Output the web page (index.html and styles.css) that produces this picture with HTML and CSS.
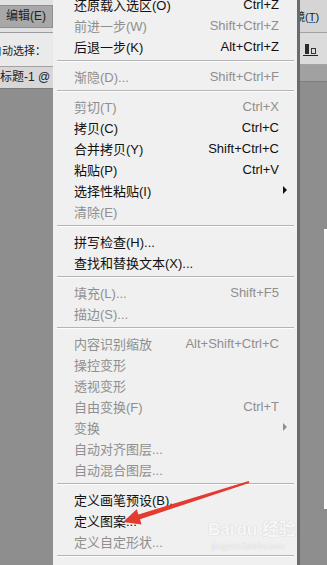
FILE: index.html
```html
<!DOCTYPE html>
<html lang="zh-CN">
<head>
    <meta charset="UTF-8">
    <meta name="viewport" content="width=device-width, initial-scale=1.0">
    <title>编辑菜单</title>
    <link rel="stylesheet" href="styles.css">
</head>
<body>
    <div class="app">
        <!-- left strip of the workspace -->
        <div class="side left">
            <div class="bar">
                <span class="bar-btn">编辑(E)</span>
            </div>
            <div class="options">自动选择：</div>
            <div class="tab">标题-1 @</div>
            <div class="canvas"></div>
        </div>

        <!-- the edit menu -->
        <div class="menu">
            <ul class="menu-list">
                <li class="item"><span>还原载入选区(O)</span><span>Ctrl+Z</span></li>
                <li class="item off"><span>前进一步(W)</span><span>Shift+Ctrl+Z</span></li>
                <li class="item"><span>后退一步(K)</span><span>Alt+Ctrl+Z</span></li>
                <li class="sep"></li>
                <li class="item off"><span>渐隐(D)...</span><span>Shift+Ctrl+F</span></li>
                <li class="sep"></li>
                <li class="item off"><span>剪切(T)</span><span>Ctrl+X</span></li>
                <li class="item"><span>拷贝(C)</span><span>Ctrl+C</span></li>
                <li class="item"><span>合并拷贝(Y)</span><span>Shift+Ctrl+C</span></li>
                <li class="item"><span>粘贴(P)</span><span>Ctrl+V</span></li>
                <li class="item"><span>选择性粘贴(I)</span><span class="arrow"></span></li>
                <li class="item off"><span>清除(E)</span></li>
                <li class="sep"></li>
                <li class="item"><span>拼写检查(H)...</span></li>
                <li class="item"><span>查找和替换文本(X)...</span></li>
                <li class="sep"></li>
                <li class="item off"><span>填充(L)...</span><span>Shift+F5</span></li>
                <li class="item off"><span>描边(S)...</span></li>
                <li class="sep"></li>
                <li class="item off"><span>内容识别缩放</span><span>Alt+Shift+Ctrl+C</span></li>
                <li class="item off"><span>操控变形</span></li>
                <li class="item off"><span>透视变形</span></li>
                <li class="item off"><span>自由变换(F)</span><span>Ctrl+T</span></li>
                <li class="item off"><span>变换</span><span class="arrow"></span></li>
                <li class="item off"><span>自动对齐图层...</span></li>
                <li class="item off"><span>自动混合图层...</span></li>
                <li class="sep"></li>
                <li class="item"><span>定义画笔预设(B)...</span></li>
                <li class="item"><span>定义图案...</span></li>
                <li class="item off"><span>定义自定形状...</span></li>
                <li class="sep"></li>
            </ul>
        </div>

        <!-- right strip of the workspace -->
        <div class="side right">
            <div class="bar"><span class="bar-text">镜(<u>T</u>)</span></div>
            <div class="options">
                <span class="align-icon"><i class="tall"></i><i class="small"></i></span>
            </div>
            <div class="tab"></div>
            <div class="canvas">
                <div class="doc-edge"></div>
            </div>
        </div>
    </div>

    <div class="watermark">
        <div class="wm-logo">Bai<b>du</b> 经验</div>
        <div class="wm-url">jingyan.baidu.com</div>
    </div>

    <svg class="pointer" width="327" height="565" viewBox="0 0 327 565">
        <polygon points="248.7,481 138.4,514.4 136.8,509.2 123,522 141.6,524.4 140,519.2 249.3,483" fill="#e43b30"/>
    </svg>
</body>
</html>
```

FILE: styles.css
```css
body {
    margin: 0;
    padding: 0;
    font-family: "Liberation Sans", "Noto Sans CJK SC", sans-serif;
    background: #8e8e8e;
}

.app {
    display: flex;
    width: 327px;
    height: 565px;
    overflow: hidden;
}

.side {
    display: flex;
    flex-direction: column;
    overflow: hidden;
}

.side.left {
    width: 53px;
}

.side.right {
    width: 27px;
    border-left: 3px solid #6b6b6b;
}

.bar {
    height: 32px;
    background: #e1e1e1;
    border-bottom: 1px solid #9c9c9c;
    display: flex;
    align-items: center;
    flex-shrink: 0;
}

.bar-btn {
    display: block;
    width: 46px;
    height: 21px;
    line-height: 21px;
    padding-left: 6px;
    background: #a8a8a8;
    border: 1px solid #8f8f8f;
    border-left: none;
    font-size: 12px;
    color: #222;
    white-space: nowrap;
}

.right .bar {
    background: #d5d5d5;
    border-bottom-color: #a2a2a2;
}

.bar-text {
    display: block;
    margin-left: -6px;
    font-size: 11px;
    color: #222;
    white-space: nowrap;
}

.bar-text u {
    text-decoration-color: #3a6fa8;
}

.options {
    height: 33px;
    background: #eaeaea;
    border-bottom: 1px solid #a4a4a4;
    display: flex;
    align-items: center;
    justify-content: flex-end;
    padding-right: 7px;
    font-size: 11px;
    color: #222;
    white-space: nowrap;
    flex-shrink: 0;
}

.right .options {
    height: 31px;
    background: #dbdbdb;
    justify-content: flex-start;
    padding: 0 0 0 3px;
}

.align-icon {
    display: flex;
    align-items: flex-end;
    gap: 2px;
    padding: 0 2px 1px 2px;
    border-bottom: 1px solid #222;
    margin-top: 2px;
}

.align-icon .tall {
    display: block;
    width: 4px;
    height: 10px;
    background: #2a2a2a;
}

.align-icon .small {
    display: block;
    width: 3px;
    height: 4px;
    border: 1px solid #333;
}

.tab {
    height: 21px;
    line-height: 21px;
    background: #d7d7d7;
    border-bottom: 1px solid #7e7e7e;
    font-size: 12px;
    color: #222;
    white-space: nowrap;
    flex-shrink: 0;
}

.right .tab {
    height: 16px;
    background: #a1a1a1;
}

.canvas {
    flex: 1;
    background: #8e8e8e;
    display: flex;
    flex-direction: column;
    align-items: flex-end;
}

.doc-edge {
    width: 3px;
    height: 280px;
    margin-top: 147px;
    background: #fff;
}

.menu {
    width: 244px;
    background: #f0f0f0;
    overflow: hidden;
}

.menu-list {
    list-style: none;
    margin: -6.5px 0 0;
    padding: 0;
}

.item {
    display: flex;
    justify-content: space-between;
    align-items: center;
    height: 21px;
    padding: 0 18px 0 21px;
    font-size: 13px;
    color: #111;
    white-space: nowrap;
}

.item.off {
    color: #8f8f8f;
}

.arrow {
    width: 0;
    height: 0;
    margin-right: -8px;
    border-top: 4px solid transparent;
    border-bottom: 4px solid transparent;
    border-left: 4px solid #111;
}

.off .arrow {
    border-left-color: #8f8f8f;
}

.sep {
    height: 0;
    margin: 3px 3px 4px 4px;
    border-top: 1px solid #b4b4b4;
    border-bottom: 1px solid #fdfdfd;
}

.watermark {
    position: absolute;
    left: 208px;
    top: 520px;
    width: 90px;
    color: #f7f7f7;
    text-shadow: 0 0 1px #d2d2d2, 0 0 1px #d2d2d2;
    white-space: nowrap;
}

.wm-logo {
    font-size: 17px;
    font-weight: bold;
    line-height: 20px;
}

.wm-logo b {
    margin-left: 2px;
}

.wm-url {
    font-size: 9px;
    line-height: 12px;
    margin-left: 4px;
}

.pointer {
    position: absolute;
    left: 0;
    top: 0;
}
```
